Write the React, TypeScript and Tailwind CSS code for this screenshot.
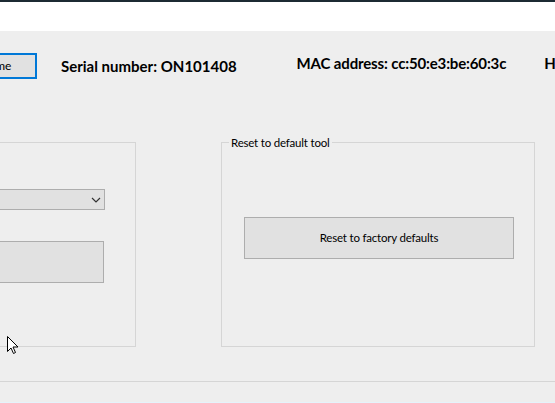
import React from "react";

function Cursor() {
  return (
    <svg width="13" height="20" viewBox="0 0 13 20" className="absolute left-[6px] top-[335px]">
      <path
        d="M1.5 1.5 L1.5 16.5 L5 13 L7.5 18.5 L9.5 17.5 L7 12 L12 12 Z"
        fill="#ffffff"
        stroke="#000000"
        strokeWidth="1"
        strokeLinejoin="miter"
      />
    </svg>
  );
}

function GroupBox({ title, className, children }: { title?: string; className: string; children?: React.ReactNode }) {
  return (
    <div className={`relative shrink-0 border border-[#d5d5d5] ${className}`}>
      {title && (
        <span className="absolute left-[7px] top-[-7px] bg-[#eeeeee] px-[2px] text-[11.5px] tracking-[-0.2px] leading-[14px] text-[#000] whitespace-nowrap">
          {title}
        </span>
      )}
      {children}
    </div>
  );
}

export default function App() {
  return (
    <div
      className="relative w-[555px] h-[403px] overflow-hidden bg-[#eeeeee] flex flex-col"
      style={{ fontFamily: 'Lato, "Noto Sans", sans-serif' }}
    >
      <div className="h-[2px] bg-[#1c2a33]" />
      <div className="h-[29px] bg-white" />

      {/* device info row */}
      <div className="h-[111px] flex items-start">
        <button className="shrink-0 ml-[-58px] mt-[22px] w-[95px] h-[26px] border-2 border-[#0078d7] bg-[#e1e1e1] text-[12px] text-center leading-[20px]">
          Set time
        </button>
        <span className="shrink-0 ml-[24px] mt-[26px] text-[15px] font-bold leading-[18px] whitespace-nowrap">
          Serial number: ON101408
        </span>
        <span className="shrink-0 ml-[60px] mt-[23px] text-[15px] font-bold leading-[18px] tracking-[-0.15px] whitespace-nowrap">
          MAC address: cc:50:e3:be:60:3c
        </span>
        <span className="shrink-0 ml-[38px] mt-[23px] text-[15px] font-bold leading-[18px] whitespace-nowrap">
          Hardware
        </span>
      </div>

      {/* tool group boxes */}
      <div className="flex items-start">
        <GroupBox className="ml-[-40px] w-[176px] h-[205px] border-l-0">
          <div className="mt-[46px] w-[145px] h-[21px] border border-[#adadad] bg-[#e1e1e1] relative">
            <svg width="10" height="6" viewBox="0 0 10 6" className="absolute right-[3px] top-[7px]">
              <polyline points="1,1 5,5 9,1" fill="none" stroke="#333333" strokeWidth="1.2" />
            </svg>
          </div>
          <div className="mt-[31px] w-[144px] h-[42px] border border-[#adadad] bg-[#e1e1e1]" />
        </GroupBox>
        <GroupBox title="Reset to default tool" className="ml-[85px] w-[314px] h-[205px]">
          <div className="pl-[22px] pt-[74px]">
            <button className="w-[270px] h-[42px] border border-[#adadad] bg-[#e1e1e1] text-[11.5px] tracking-[-0.2px] text-[#000]">
              Reset to factory defaults
            </button>
          </div>
        </GroupBox>
      </div>

      <div className="mt-[34px] h-px bg-[#d5d5d5]" />
      <div className="flex-1" />
      <div className="h-px bg-[#e5f3fb]" />

      <Cursor />
    </div>
  );
}
